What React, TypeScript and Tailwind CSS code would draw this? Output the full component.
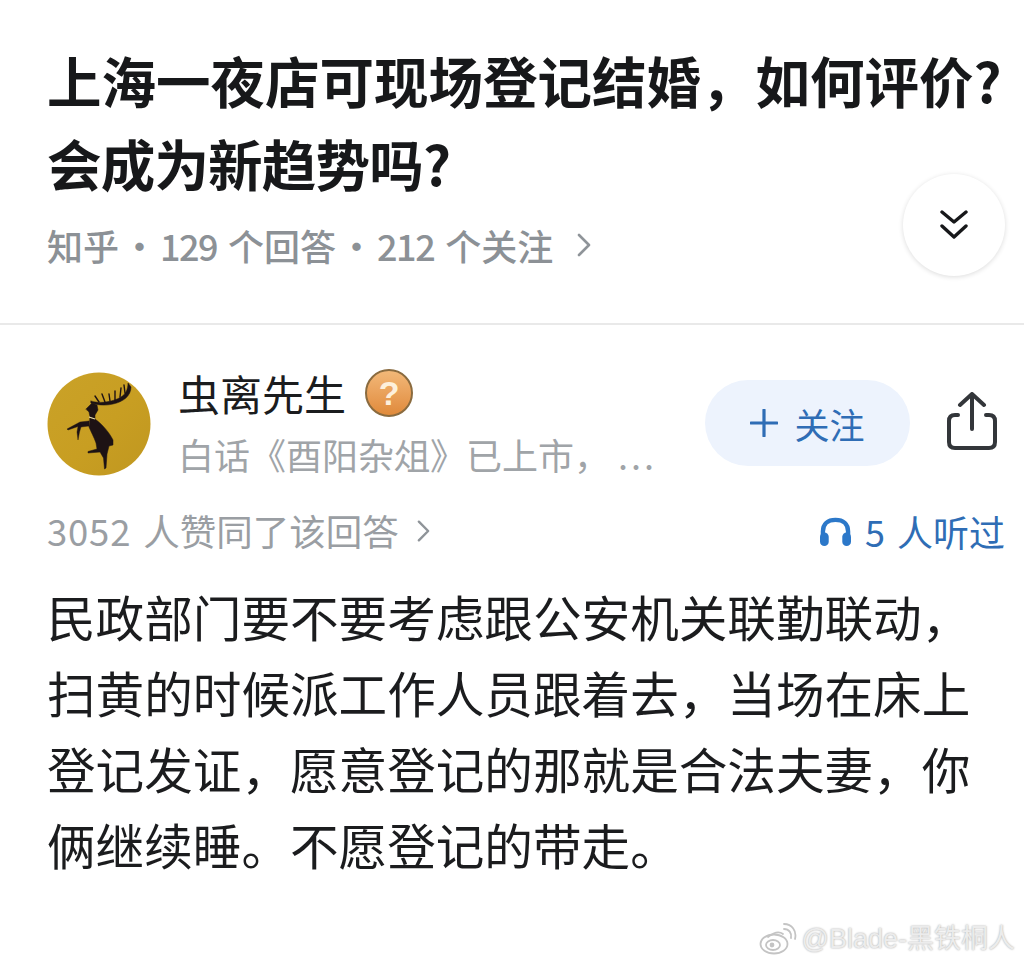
import React from "react";

const CJK = "font-['Noto_Sans_CJK_SC','Noto_Sans',sans-serif]";

function Stag() {
  return (
    <svg viewBox="0 0 104 104" className="w-[104px] h-[104px] shrink-0">
      <defs>
        <linearGradient id="gold" x1="0" y1="0" x2="1" y2="1">
          <stop offset="0" stopColor="#caa228" />
          <stop offset="0.55" stopColor="#c89e22" />
          <stop offset="1" stopColor="#c09720" />
        </linearGradient>
      </defs>
      <circle cx="52" cy="52" r="51.5" fill="url(#gold)" />
      <g fill="#1d1214" stroke="#1d1214" strokeLinejoin="round" strokeLinecap="round">
        <path d="M39 37 L45 31 L50 33 L51 38 L48 43 L48 47 L43 45 L42 40 Z" strokeWidth="0.5" />
        <path d="M43 46 L48 47 C55 52 62 60 66 68 L66 73 L62 74 L60 82 L59 96 L57.5 97 L56.5 86 L53 80 L41 81 L41 79.5 L50 77 L49 71 C47 65 44 60 42 55 Z" strokeWidth="0.5" />
        <path d="M42 49 L33 50 L20 57 L21 58 L31 54.5 L30 60 L31 68 L32.5 60 L34 55 L42 54 Z" strokeWidth="0.4" />
        <path d="M44 29 C52 32 66 30 74 25 C79 22 81 17 81 11 L84 15 C84 24 76 30 66 32 C58 34 50 33 44 31 Z" strokeWidth="0.5" />
        <path d="M52 30 L48 24 M58 30 L55 22 M63 29 L62 22 M68 28 L68 19 M73 25 L74 16 M78 21 L77 13" fill="none" strokeWidth="1.4" />
      </g>
      <path d="M42 45 L48 47" stroke="#e8dcae" strokeWidth="1.2" />
    </svg>
  );
}

function Badge() {
  return (
    <span className="w-[48px] h-[48px] rounded-full border-2 border-[#8a6b3f] bg-gradient-to-b from-[#f2b878] to-[#e08a3a] flex items-center justify-center shrink-0">
      <span className="text-[34px] leading-none font-bold text-[#fdf0dc] font-['Liberation_Sans',sans-serif]">?</span>
    </span>
  );
}

function ChevronDouble() {
  return (
    <svg viewBox="0 0 28 30" className="w-[28px] h-[30px]" fill="none" stroke="#17181a" strokeWidth="3.4" strokeLinecap="round" strokeLinejoin="round">
      <path d="M2 2 L14 12 L26 2" />
      <path d="M2 16 L14 27 L26 16" />
    </svg>
  );
}

function Share() {
  return (
    <svg viewBox="0 0 50 58" className="w-[50px] h-[58px] shrink-0" fill="none" stroke="#33363a" strokeWidth="4" strokeLinecap="round" strokeLinejoin="round">
      <path d="M25 37 L25 3" />
      <path d="M13 13 L25 2 L37 13" />
      <path d="M11 23 L8 23 Q2 23 2 29 L2 50 Q2 56 8 56 L42 56 Q48 56 48 50 L48 29 Q48 23 42 23 L39 23" />
    </svg>
  );
}

function Headphones() {
  return (
    <svg viewBox="0 0 34 32" className="w-[33px] h-[31px] shrink-0">
      <path d="M4 20 L4 16 C4 8 9 4 17 4 C25 4 30 8 30 16 L30 20" fill="none" stroke="#2c78c9" strokeWidth="4.5" />
      <rect x="1" y="17" width="9" height="14" rx="4.5" fill="#2c78c9" />
      <rect x="24" y="17" width="9" height="14" rx="4.5" fill="#2c78c9" />
    </svg>
  );
}

function Chevron({ className }: { className?: string }) {
  return (
    <svg viewBox="0 0 14 24" className={className} fill="none" stroke="#8f9499" strokeWidth="2.6" strokeLinecap="round" strokeLinejoin="round">
      <path d="M2 2 L12 12 L2 22" />
    </svg>
  );
}

function Weibo() {
  return (
    <svg viewBox="0 0 38 32" className="w-[38px] h-[32px] shrink-0" fill="none" stroke="#c4c4c4" strokeWidth="1.8" strokeLinecap="round">
      <ellipse cx="15" cy="21" rx="13.5" ry="9.5" />
      <ellipse cx="14" cy="22" rx="7" ry="5" />
      <circle cx="13" cy="22" r="1.5" fill="#c4c4c4" />
      <path d="M24 11 C20 8 14 10 9 14" />
      <path d="M25 6 C30 6 33 10 32 15" />
      <path d="M25 1 C33 1 38 8 36 16" />
    </svg>
  );
}

export default function App() {
  return (
    <div className={`w-[1024px] h-[963px] bg-white overflow-hidden flex flex-col ${CJK}`}>
      <header className="h-[325px] shrink-0 border-b-2 border-[#e9e9e9] pl-[47px] pr-[19px] pt-[38px] flex flex-col">
        <h1 className="text-[54.5px] leading-[83px] font-bold text-[#17181a] whitespace-nowrap">
          <div>上海一夜店可现场登记结婚，如何评价?</div>
          <div className="tracking-[-0.8px]">会成为新趋势吗?</div>
        </h1>
        <div className="flex items-center justify-between">
          <div className="flex items-center text-[36px] leading-[50px] text-[#8c9196] font-medium mt-[10px]">
            <span>知乎</span>
            <span className="w-[41px] text-center">·</span>
            <span className="tracking-[-1.5px]">129</span>
            <span className="ml-[11px]">个回答</span>
            <span className="w-[41px] text-center">·</span>
            <span className="tracking-[-1.5px]">212</span>
            <span className="ml-[11px]">个关注</span>
            <Chevron className="w-[14px] h-[24px] ml-[24px]" />
          </div>
          <div className="w-[102px] h-[102px] rounded-full bg-white shadow-[0_1px_5px_rgba(0,0,0,0.14)] flex items-center justify-center -mt-[30px]">
            <ChevronDouble />
          </div>
        </div>
      </header>

      <section className="pl-[47px] pr-[19px] pt-[47px] flex flex-col">
        <div className="flex items-center">
          <Stag />
          <div className="ml-[27px] w-[527px] flex flex-col">
            <div className="flex items-center gap-[19px] -mt-[4px]">
              <span className="text-[42px] leading-[50px] text-[#1b1c1e]">虫离先生</span>
              <Badge />
            </div>
            <div className="text-[36px] leading-[44px] text-[#a0a4a8] mt-[14px] whitespace-nowrap">
              白话《酉阳杂俎》已上市，<span className="ml-[8px] tracking-[3px]">...</span>
            </div>
          </div>
          <div className="w-[205px] h-[86px] rounded-full bg-[#edf3fd] flex items-center justify-center gap-[16px] text-[#2f6db5] -mt-[2px]">
            <svg viewBox="0 0 28 28" className="w-[28px] h-[28px]" fill="none" stroke="#2f6db5" strokeWidth="3.2" strokeLinecap="round">
              <path d="M14 1 L14 27 M1 14 L27 14" />
            </svg>
            <span className="text-[35px] leading-none">关注</span>
          </div>
          <div className="ml-[37px] -mt-[6px]"><Share /></div>
        </div>

        <div className="flex items-center justify-between mt-[30px]">
          <div className="flex items-center text-[36.5px] leading-[50px] text-[#9a9ea3]">
            <span className="tracking-[0.8px]">3052</span>
            <span className="ml-[12px]">人赞同了该回答</span>
            <Chevron className="w-[13px] h-[24px] ml-[18px]" />
          </div>
          <div className="flex items-center text-[36px] leading-[50px] text-[#2f6db5]">
            <Headphones />
            <span className="ml-[13px]">5</span>
            <span className="ml-[12px]">人听过</span>
          </div>
        </div>

        <div className="mt-[22px] text-[48.6px] leading-[76px] text-[#1b1c1e] whitespace-nowrap">
          <div>民政部门要不要考虑跟公安机关联勤联动，</div>
          <div>扫黄的时候派工作人员跟着去，当场在床上</div>
          <div>登记发证，愿意登记的那就是合法夫妻，你</div>
          <div>俩继续睡。不愿登记的带走。</div>
        </div>

        <div className="flex items-center justify-end gap-[5px] -mr-[10px] mt-[40px] text-[27px] leading-[34px] text-[#ececec] [text-shadow:0_0_2px_#a0a0a0] font-['Liberation_Sans','Noto_Sans_CJK_SC',sans-serif]">
          <Weibo />
          <span>@Blade-黑铁桐人</span>
        </div>
      </section>
    </div>
  );
}
